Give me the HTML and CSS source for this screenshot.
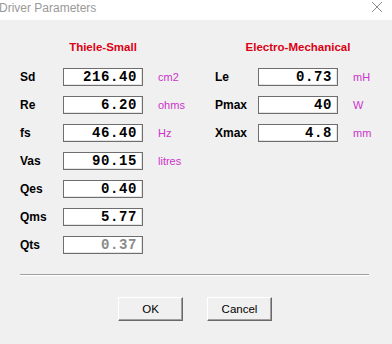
FILE: index.html
```html
<!DOCTYPE html>
<html lang="en">
<head>
	<meta charset="UTF-8">
	<title>Driver Parameters</title>
	<link rel="stylesheet" href="styles.css">
</head>
<body>
	<!-- title bar -->
	<div class="titlebar">
		<span class="title">Driver Parameters</span>
		<svg class="close" width="12" height="12" viewBox="0 0 12 12"><path d="M1 1L11 11M11 1L1 11" stroke="#8a8a8a" stroke-width="1"/></svg>
	</div>

	<div class="dialog">
		<div class="panels">
			<!-- left -->
			<div class="panel">
				<div class="head">Thiele-Small</div>
				<div class="lbl">Sd</div><div class="box">216.40</div><div class="unit">cm2</div>
				<div class="lbl">Re</div><div class="box">6.20</div><div class="unit">ohms</div>
				<div class="lbl">fs</div><div class="box">46.40</div><div class="unit">Hz</div>
				<div class="lbl">Vas</div><div class="box">90.15</div><div class="unit">litres</div>
				<div class="lbl">Qes</div><div class="box">0.40</div><div class="unit"></div>
				<div class="lbl">Qms</div><div class="box">5.77</div><div class="unit"></div>
				<div class="lbl">Qts</div><div class="box off">0.37</div><div class="unit"></div>
			</div>
			<!-- right -->
			<div class="panel">
				<div class="head">Electro-Mechanical</div>
				<div class="lbl">Le</div><div class="box">0.73</div><div class="unit">mH</div>
				<div class="lbl">Pmax</div><div class="box">40</div><div class="unit">W</div>
				<div class="lbl">Xmax</div><div class="box">4.8</div><div class="unit">mm</div>
			</div>
		</div>

		<div class="sep"></div>

		<div class="buttons">
			<button class="btn">OK</button>
			<button class="btn">Cancel</button>
		</div>
	</div>
</body>
</html>
```

FILE: styles.css
```css
body{
	margin:0;
	width:392px;
	height:344px;
	background:#f0f0f0;
	font-family:"Liberation Sans",Arial,sans-serif;
	overflow:hidden;
}
.titlebar{
	height:20px;
	background:#fff;
	display:flex;
	align-items:center;
	justify-content:space-between;
	padding:0 9px 0 0;
}
.title{
	font-size:12px;
	color:#999;
	margin-left:-1px;
	margin-top:-4px;
}
.close{
	margin-top:-6px;
}

.dialog{
	padding:20px 0 0 20px;
}
.panels{
	display:flex;
}
.panel{
	display:grid;
	grid-template-columns:43px 80px auto;
	grid-auto-rows:18px;
	row-gap:10px;
	align-items:center;
	width:195px;
	flex-shrink:0;
}
.head{
	grid-column:2;
	justify-self:center;
	white-space:nowrap;
	color:#dc0014;
	font-weight:bold;
	font-size:11.5px;
	line-height:14px;
	align-self:start;
	margin-bottom:-6px;
}
.lbl{
	grid-column:1;
	font-weight:bold;
	font-size:12px;
	color:#000;
}
.box{
	height:18px;
	box-sizing:border-box;
	background:#fff;
	border:1px solid #6e6e6e;
	box-shadow:inset -1px -1px 0 #e3e3e3;
	text-align:right;
	padding-right:5px;
	font-family:"Liberation Mono","Courier New",monospace;
	font-weight:bold;
	font-size:14px;
	letter-spacing:0.6px;
	line-height:16px;
	color:#000;
}
.box.off{
	color:#8a8a8a;
}
.unit{
	margin-left:15px;
	font-size:11px;
	color:#cc33cc;
}

.sep{
	width:349px;
	margin-top:20px;
	border-top:1px solid #a0a0a0;
	border-bottom:1px solid #fff;
}
.buttons{
	display:flex;
	gap:24px;
	margin:21px 0 0 98px;
}
.btn{
	width:65px;
	height:24px;
	background:#f0f0f0;
	border:none;
	border-top:1px solid #fff;
	border-left:1px solid #fff;
	border-right:1px solid #696969;
	border-bottom:1px solid #696969;
	box-shadow:inset -1px -1px 0 #a0a0a0;
	font-family:"Liberation Sans",Arial,sans-serif;
	font-size:11.5px;
	color:#000;
	padding:0;
}
```
